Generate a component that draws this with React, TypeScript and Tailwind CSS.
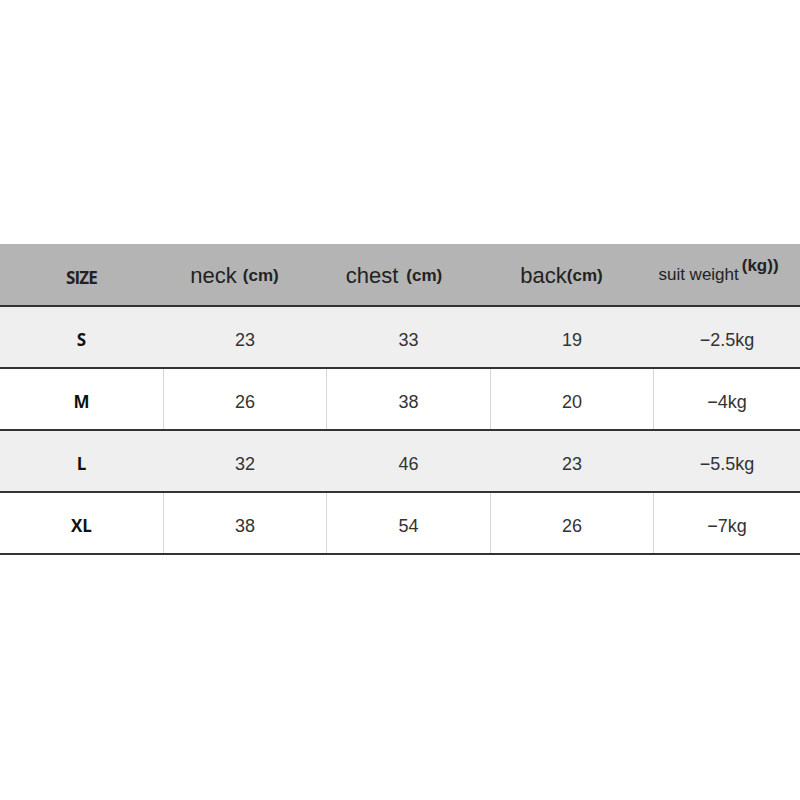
const rows = [
  { size: 'S', neck: '23', chest: '33', back: '19', weight: '−2.5kg', shaded: true },
  { size: 'M', neck: '26', chest: '38', back: '20', weight: '−4kg', shaded: false },
  { size: 'L', neck: '32', chest: '46', back: '23', weight: '−5.5kg', shaded: true },
  { size: 'XL', neck: '38', chest: '54', back: '26', weight: '−7kg', shaded: false },
];

export default function App() {
  return (
    <div className="w-[800px] h-[800px] bg-white pt-[244px] font-['Liberation_Sans',Arial,sans-serif]">
      {/* header */}
      <div className="grid grid-cols-[163px_163px_164px_163px_147px] h-[63px] bg-[#b4b4b4] border-b-2 border-[#333] text-[#222]">
        <div className="flex items-center justify-center font-['Open_Sans',sans-serif] font-bold text-[17px] tracking-[-0.8px] pt-[6px]">SIZE</div>
        <div className="flex items-center justify-center pr-[20px] pt-[2px]">
          <span className="text-[22px]">neck</span>
          <span className="text-[17px] font-bold ml-[6px]">(cm)</span>
        </div>
        <div className="flex items-center justify-center pr-[28px] pt-[2px]">
          <span className="text-[22px]">chest</span>
          <span className="text-[17px] font-bold ml-[8px]">(cm)</span>
        </div>
        <div className="flex items-center justify-center pr-[20px] pt-[2px]">
          <span className="text-[22px]">back</span>
          <span className="text-[17px] font-bold">(cm)</span>
        </div>
        <div className="flex items-start justify-center pt-[9px] pr-[16px]">
          <span className="text-[17px] mt-[9px]">suit weight</span>
          <span className="text-[17px] font-bold ml-[3px]">(kg))</span>
        </div>
      </div>
      {rows.map((r) => (
        <div
          key={r.size}
          className={`grid grid-cols-[163px_163px_164px_163px_147px] h-[62px] border-b-2 border-[#333] text-[18px] text-[#333] ${
            r.shaded ? 'bg-[#efefef]' : 'bg-white'
          }`}
        >
          <div className="flex items-center justify-center pt-[6px] font-['Open_Sans',sans-serif] font-bold text-[17px] text-[#111]">{r.size}</div>
          <div className={`flex items-center justify-center pt-[6px] border-l ${r.shaded ? 'border-transparent' : 'border-[#d6d6d6]'}`}>{r.neck}</div>
          <div className={`flex items-center justify-center pt-[6px] border-l ${r.shaded ? 'border-transparent' : 'border-[#d6d6d6]'}`}>{r.chest}</div>
          <div className={`flex items-center justify-center pt-[6px] border-l ${r.shaded ? 'border-transparent' : 'border-[#d6d6d6]'}`}>{r.back}</div>
          <div className={`flex items-center justify-center pt-[6px] border-l ${r.shaded ? 'border-transparent' : 'border-[#d6d6d6]'}`}>{r.weight}</div>
        </div>
      ))}
    </div>
  );
}
